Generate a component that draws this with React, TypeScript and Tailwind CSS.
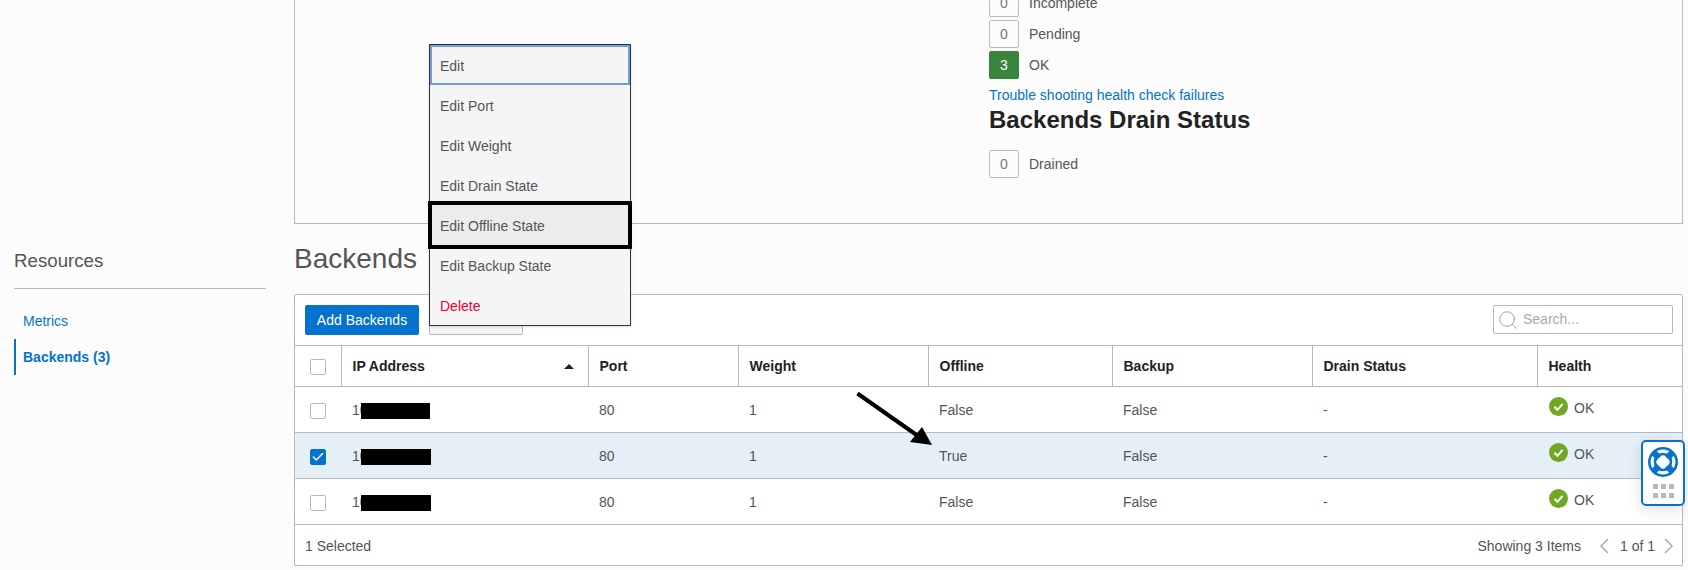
import { Check, Search } from 'lucide-react';

const menuItems = ['Edit Port', 'Edit Weight', 'Edit Drain State'];

const rows = [
  { offline: 'False', selected: false, redact: 'w-[69px]' },
  { offline: 'True', selected: true, redact: 'w-[70px]' },
  { offline: 'False', selected: false, redact: 'w-[70px]' },
];

const headers = ['Port', 'Weight', 'Offline', 'Backup', 'Drain Status'];

function CountRow({ count, label, ok }: { count: number; label: string; ok?: boolean }) {
  return (
    <div className="flex items-center gap-[10px] text-[14px] text-[#555555]">
      <span className={`w-[30px] h-[28px] rounded-[2px] border flex items-center justify-center ${ok ? 'bg-[#3a853d] border-[#3a853d] text-white' : 'border-[#b3b8c3] text-[#777777]'}`}>
        {count}
      </span>
      {label}
    </div>
  );
}

function Box({ checked }: { checked?: boolean }) {
  return (
    <span className={`w-[16px] h-[16px] rounded-[2px] border flex items-center justify-center ${checked ? 'bg-[#0572ce] border-[#0572ce]' : 'bg-white border-[#b3b8c3]'}`}>
      {checked && <Check className="w-[14px] h-[14px] text-white" strokeWidth={2.5} />}
    </span>
  );
}

function HealthIcon() {
  return (
    <svg width="19" height="19" viewBox="0 0 19 19" className="shrink-0 -mt-[5px]">
      <circle cx="9.5" cy="9.5" r="9.5" fill="#6fa823" />
      <path d="M5.4 9.8l3 3 5.2-6" fill="none" stroke="#fff" strokeWidth="2" />
    </svg>
  );
}

function Chevron({ d }: { d: string }) {
  return (
    <svg width="10" height="16" viewBox="0 0 10 16" className="shrink-0">
      <path d={d} fill="none" stroke="#aaaaaa" strokeWidth="1.5" />
    </svg>
  );
}

function HelpWidget() {
  return (
    <div className="absolute left-[1641px] top-[440px] w-[44px] h-[66px] rounded-[5px] border-2 border-[#0572ce] bg-white shadow-[0_4px_16px_rgba(0,0,0,0.12)] flex flex-col items-center pt-[5px]">
      <svg width="30" height="30" viewBox="0 0 30 30">
        <circle cx="15" cy="15" r="13.7" fill="none" stroke="#0572ce" strokeWidth="2.6" />
        <circle cx="15" cy="15" r="8" fill="none" stroke="#0572ce" strokeWidth="2.6" />
        <path d="M5.5 5.5l5.5 5.5M24.5 5.5L19 11M5.5 24.5L11 19M24.5 24.5L19 19" stroke="#0572ce" strokeWidth="6.5" />
      </svg>
      <div className="grid grid-cols-3 gap-x-[3px] gap-y-[4px] mt-[7px]">
        {[0, 1, 2, 3, 4, 5].map(i => (
          <span key={i} className="w-[5px] h-[5px] bg-[#b3b8c3]" />
        ))}
      </div>
    </div>
  );
}

export default function App() {
  return (
    <div className="relative w-[1688px] h-[570px] overflow-hidden bg-[#fcfcfc] font-['Liberation_Sans',Arial,sans-serif] text-[14px] text-[#555555] flex">
      <aside className="w-[294px] shrink-0 pl-[14px] pr-[28px] pt-[249px]">
        <div className="text-[18.7px] leading-[24px] text-[#555555] pb-[15px] border-b border-[#b3b8c3]">Resources</div>
        <div className="mt-[22px] pl-[9px] text-[#0572ce] leading-[20px]">Metrics</div>
        <div className="mt-[8px] h-[36px] border-l-2 border-[#0572ce] pl-[7px] flex items-center font-bold text-[#0572ce]">Backends (3)</div>
      </aside>

      <main className="w-[1389px] shrink-0">
        <div className="h-[224px] border-x border-b border-[#b3b8c3] pl-[694px] overflow-hidden">
          <div className="-mt-[11px] flex flex-col gap-[3px]">
            <CountRow count={0} label="Incomplete" />
            <CountRow count={0} label="Pending" />
            <CountRow count={3} label="OK" ok />
          </div>
          <div className="mt-[7px] text-[#0572ce] leading-[18px]">Trouble shooting health check failures</div>
          <h2 className="text-[24px] leading-[32px] font-bold text-[#222222]">Backends Drain Status</h2>
          <div className="mt-[14px]">
            <CountRow count={0} label="Drained" />
          </div>
        </div>

        <h1 className="text-[28px] leading-[34px] text-[#555555] mt-[18px] mb-[18px]">Backends</h1>

        <div className="border border-[#b3b8c3] rounded-t-[2px] bg-white">
          <div className="h-[50px] pl-[10px] pr-[9px] pt-[10px] flex items-start">
            <button className="w-[114px] h-[30px] pt-[1px] rounded-[2px] bg-[#0572ce] text-white">Add Backends</button>
            <button className="ml-[10px] w-[94px] h-[30px] rounded-[2px] border border-[#b3b8c3] bg-[#f5f5f5]" />
            <div className="ml-auto w-[180px] h-[29px] rounded-[2px] border border-[#b3b8c3] flex items-center pl-[3px] gap-[4px] text-[#aaaaaa]">
              <Search className="w-[22px] h-[22px] text-[#999999]" strokeWidth={1} />
              Search...
            </div>
          </div>
          <table className="w-full table-fixed border-collapse">
            <colgroup>
              <col className="w-[46px]" />
              <col className="w-[247px]" />
              <col className="w-[150px]" />
              <col className="w-[190px]" />
              <col className="w-[184px]" />
              <col className="w-[200px]" />
              <col className="w-[225px]" />
              <col />
            </colgroup>
            <thead>
              <tr className="h-[41px] border-y border-[#b3b8c3] text-left text-[#222222]">
                <th className="border-r border-[#b3b8c3] pl-[15px] pt-[2px]"><Box /></th>
                <th className="border-r border-[#b3b8c3] pl-[11px] pr-[14px] font-bold">
                  <div className="flex items-center justify-between">
                    IP Address
                    <span className="w-0 h-0 border-x-[5px] border-x-transparent border-b-[5px] border-b-[#222222]" />
                  </div>
                </th>
                {headers.map(h => (
                  <th key={h} className="border-r border-[#b3b8c3] pl-[11px] font-bold">{h}</th>
                ))}
                <th className="pl-[11px] font-bold">Health</th>
              </tr>
            </thead>
            <tbody>
              {rows.map((r, i) => (
                <tr key={i} className={`h-[46px] border-b border-[#b3b8c3] ${r.selected ? 'bg-[#e4eff8]' : ''}`}>
                  <td className="pl-[15px] pt-[2px]"><Box checked={r.selected} /></td>
                  <td className="pl-[11px] pt-[2px]">
                    <span className="flex items-center">10<span className={`${r.redact} h-[16px] bg-black -ml-[6.6px]`} /></span>
                  </td>
                  <td className="pl-[11px] pt-[2px]">80</td>
                  <td className="pl-[11px] pt-[2px]">1</td>
                  <td className="pl-[11px] pt-[2px]">{r.offline}</td>
                  <td className="pl-[11px] pt-[2px]">False</td>
                  <td className="pl-[11px] pt-[2px]">-</td>
                  <td className="pl-[12px]">
                    <div className="-mt-[2px] flex items-center gap-[6px]"><HealthIcon />OK</div>
                  </td>
                </tr>
              ))}
            </tbody>
          </table>
          <div className="h-[40px] pl-[10px] pr-[8px] pt-[2px] flex items-center">
            1 Selected
            <span className="ml-auto mr-[18px]">Showing 3 Items</span>
            <Chevron d="M9 1L2 8l7 7" />
            <span className="ml-[11px] mr-[9px]">1 of 1</span>
            <Chevron d="M1 1l7 7-7 7" />
          </div>
        </div>
      </main>

      {/* open action menu */}
      <div className="absolute left-[429px] top-[44px] w-[202px] border border-[#333333] bg-[#f5f5f5] shadow-sm">
        <div className="h-[40px] border-2 border-[#6f9fd8] pl-[8px] pt-[2px] flex items-center">Edit</div>
        {menuItems.map(m => (
          <div key={m} className="h-[40px] pl-[10px] pt-[2px] flex items-center">{m}</div>
        ))}
        <div className="relative h-[48px] -my-[4px] -mx-[2px] border-4 border-black bg-[#ececec] pl-[8px] pt-[2px] flex items-center">Edit Offline State</div>
        <div className="h-[40px] pl-[10px] pt-[2px] flex items-center">Edit Backup State</div>
        <div className="h-[40px] pl-[10px] pt-[2px] flex items-center text-[#e8003a]">Delete</div>
      </div>

      {/* annotation arrow */}
      <svg className="absolute left-[850px] top-[385px]" width="90" height="66" viewBox="850 385 90 66">
        <path d="M857.5 393.5L918 436" stroke="#000" strokeWidth="4" />
        <path d="M932 445L910 442L922 427Z" fill="#000" />
      </svg>

      <HelpWidget />
    </div>
  );
}
